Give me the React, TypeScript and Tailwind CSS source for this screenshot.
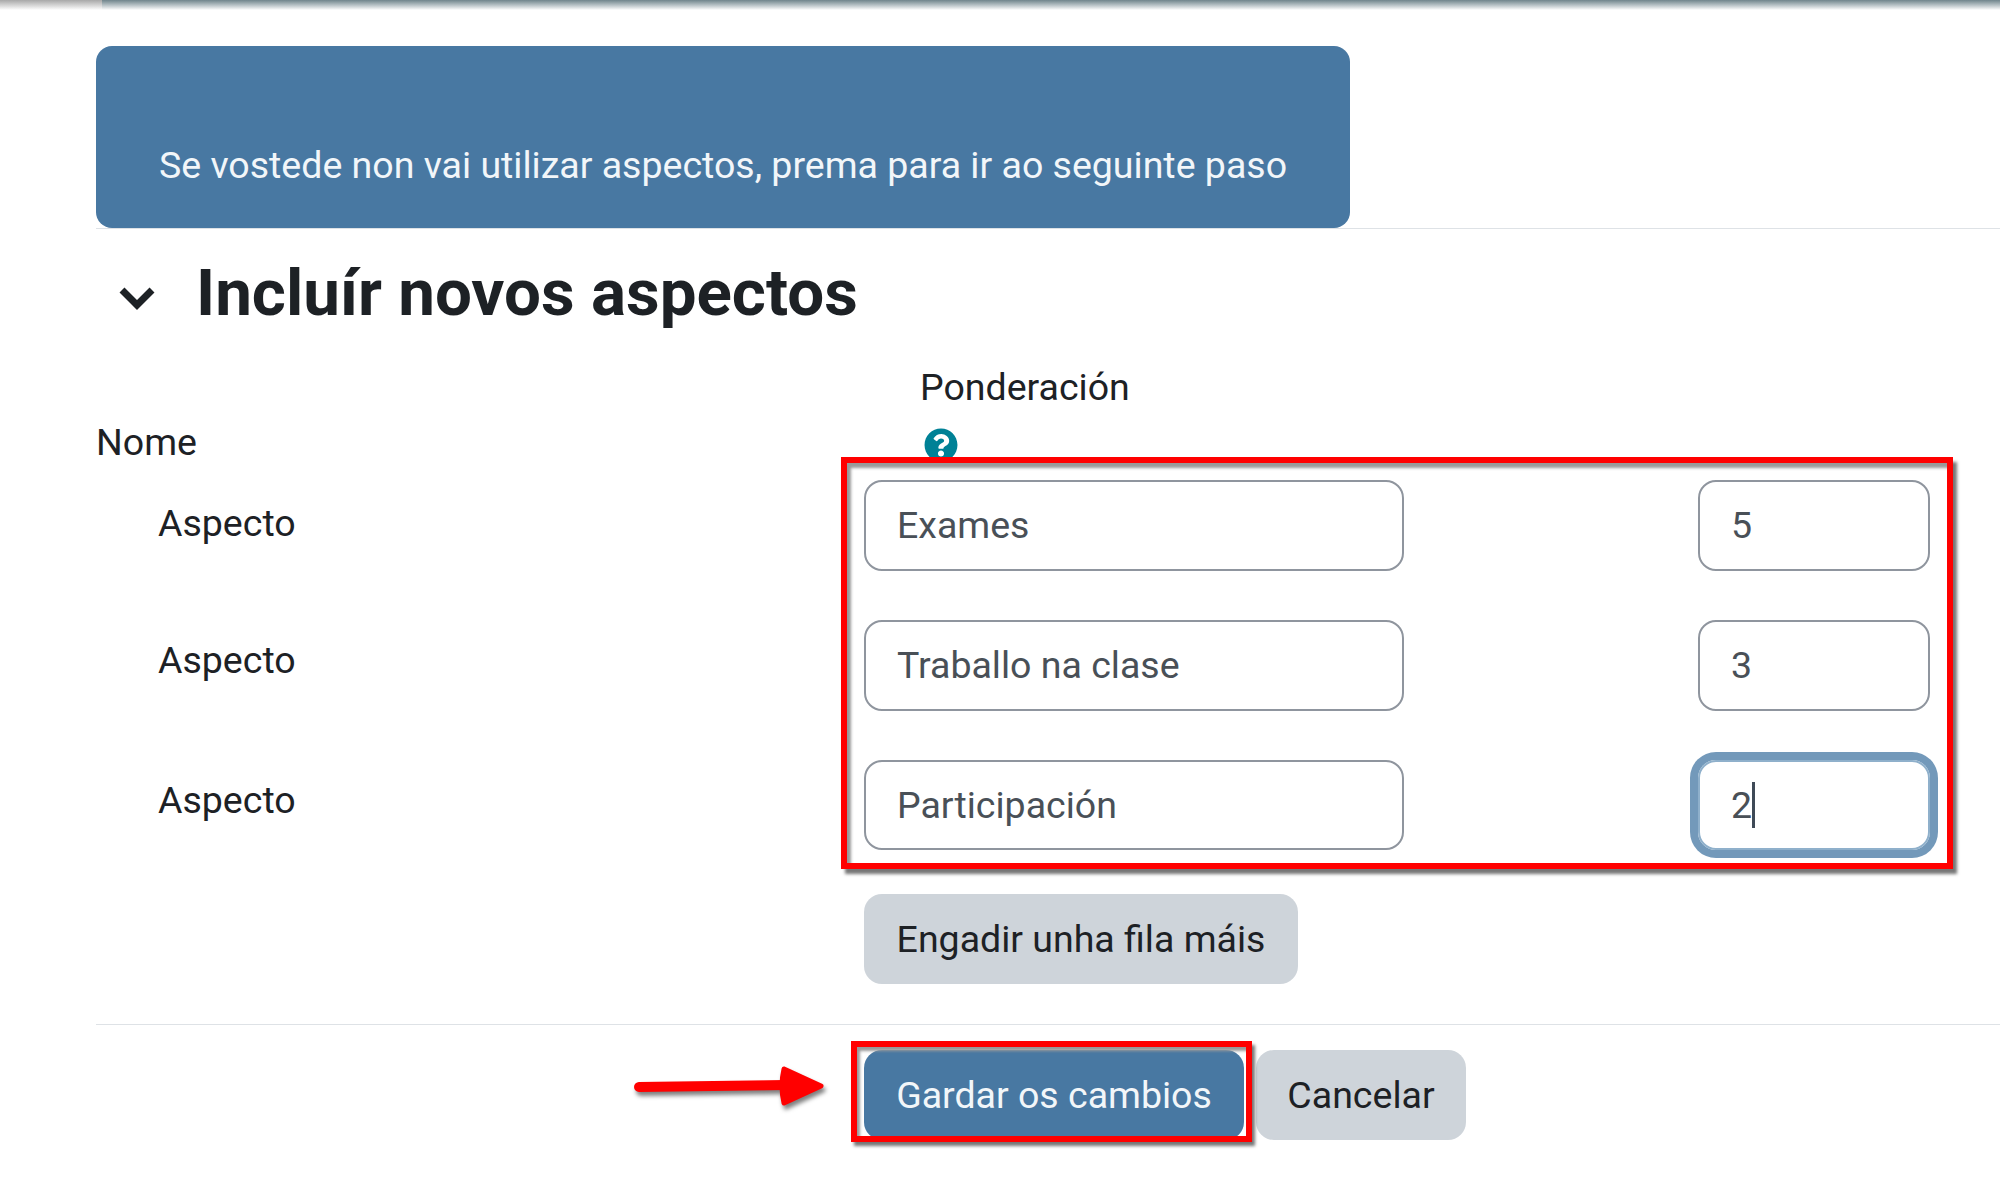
import { FaQuestionCircle } from 'react-icons/fa';

const rows = [
  { name: 'Exames', weight: '5', label: 'w-[768px] pl-[62px] leading-[86px]', height: 'h-[91px]' },
  { name: 'Traballo na clase', weight: '3', label: 'w-[768px] pl-[62px] leading-[81px]', height: 'h-[91px]' },
  { name: 'Participación', weight: '2', label: 'w-[768px] pl-[62px] leading-[81px]', height: 'h-[90px]', focused: true },
];

export default function App() {
  return (
    <div className="relative h-[1184px] w-[2000px] overflow-hidden bg-white font-['Roboto',sans-serif] text-[37.5px] text-[#1d2125]">
      {/* top edge of the cropped browser */}
      <div className="flex h-[10px]">
        <div className="w-[102px] bg-gradient-to-b from-[#a8a8a8] to-[#ffffff]" />
        <div className="flex-1 bg-gradient-to-b from-[#70858c] to-[#ffffff]" />
      </div>

      <div className="pl-[96px]">
        {/* info box */}
        <div className="mt-[36px] flex h-[182px] w-[1254px] items-end rounded-[16px] bg-[#4878a2] pb-[35px] pl-[63px] text-[#f2f6f9]">
          Se vostede non vai utilizar aspectos, prema para ir ao seguinte paso
        </div>
        <div className="h-[1px] bg-[#dee2e6]" />

        {/* section title */}
        <div className="mt-[27px] flex h-[72px] items-center">
          <svg className="ml-[22px] mt-[11px] h-[26px] w-[38px]" viewBox="0 0 38 26" fill="none">
            <path d="M4 5 L19 20 L34 5" stroke="#1d2125" strokeWidth="7" />
          </svg>
          <h2 className="ml-[40px] pt-[2px] text-[65.5px] font-bold leading-none">Incluír novos aspectos</h2>
        </div>

        {/* column headers */}
        <div className="mt-[25px] flex h-[127px]">
          <div className="w-[768px] self-end pb-[16px] leading-[44px]">Nome</div>
          <div className="pl-[56px] pt-[12px] leading-[44px]">
            <div>Ponderación</div>
            <FaQuestionCircle className="ml-[4px] mt-[19px] text-[34px] text-[#008196]" />
          </div>
        </div>

        {/* aspect rows */}
        <div className="flex flex-col gap-[49px]">
          {rows.map((row) => (
            <div key={row.name} className={`flex ${row.height}`}>
              <div className={row.label}>Aspecto</div>
              <div className="flex w-[540px] items-center rounded-[18px] border-[2px] border-[#8f959e] pl-[31px] text-[#495057]">
                {row.name}
              </div>
              <div
                className={
                  row.focused
                    ? 'ml-[294px] flex w-[232px] items-center rounded-[18px] border-[2px] border-[#8fb0cb] pl-[31px] text-[#495057] shadow-[0_0_0_8px_#7399ba]'
                    : 'ml-[294px] flex w-[232px] items-center rounded-[18px] border-[2px] border-[#8f959e] pl-[31px] text-[#495057]'
                }
              >
                {row.weight}
                {row.focused && <span className="h-[46px] w-[3px] bg-[#3f4a57]" />}
              </div>
            </div>
          ))}
        </div>

        <div className="ml-[768px] mt-[44px] flex h-[90px] w-[434px] items-center justify-center rounded-[18px] bg-[#ced4da]">
          Engadir unha fila máis
        </div>

        <div className="mt-[40px] h-[1px] bg-[#dee2e6]" />

        {/* form actions */}
        <div className="ml-[768px] mt-[25px] flex gap-[12px]">
          <div className="flex h-[90px] w-[380px] items-center justify-center rounded-[18px] bg-[#4878a2] text-[#f2f6f9]">
            Gardar os cambios
          </div>
          <div className="flex h-[90px] w-[210px] items-center justify-center rounded-[18px] bg-[#ced4da]">
            Cancelar
          </div>
        </div>
      </div>

      {/* red annotations painted over the screenshot */}
      <div className="absolute left-[841px] top-[457px] h-[412px] w-[1112px] border-[6px] border-[#ff0000] shadow-[4px_5px_3px_#777,inset_4px_5px_3px_#999]" />
      <div className="absolute left-[851px] top-[1041px] h-[101px] w-[401px] border-[6px] border-[#ff0000] shadow-[3px_4px_3px_#777,inset_3px_4px_3px_#999]" />
      <svg className="absolute left-[630px] top-[1060px] h-[50px] w-[205px] drop-shadow-[2px_4px_2px_rgba(0,0,0,0.5)]" viewBox="0 0 205 50">
        <path d="M9 27 L155 25" stroke="#ff0000" strokeWidth="10" strokeLinecap="round" />
        <path d="M154 9 L191 26 L154 43 Q150 26 154 9 Z" fill="#ff0000" stroke="#ff0000" strokeWidth="5" strokeLinejoin="round" />
      </svg>
    </div>
  );
}
